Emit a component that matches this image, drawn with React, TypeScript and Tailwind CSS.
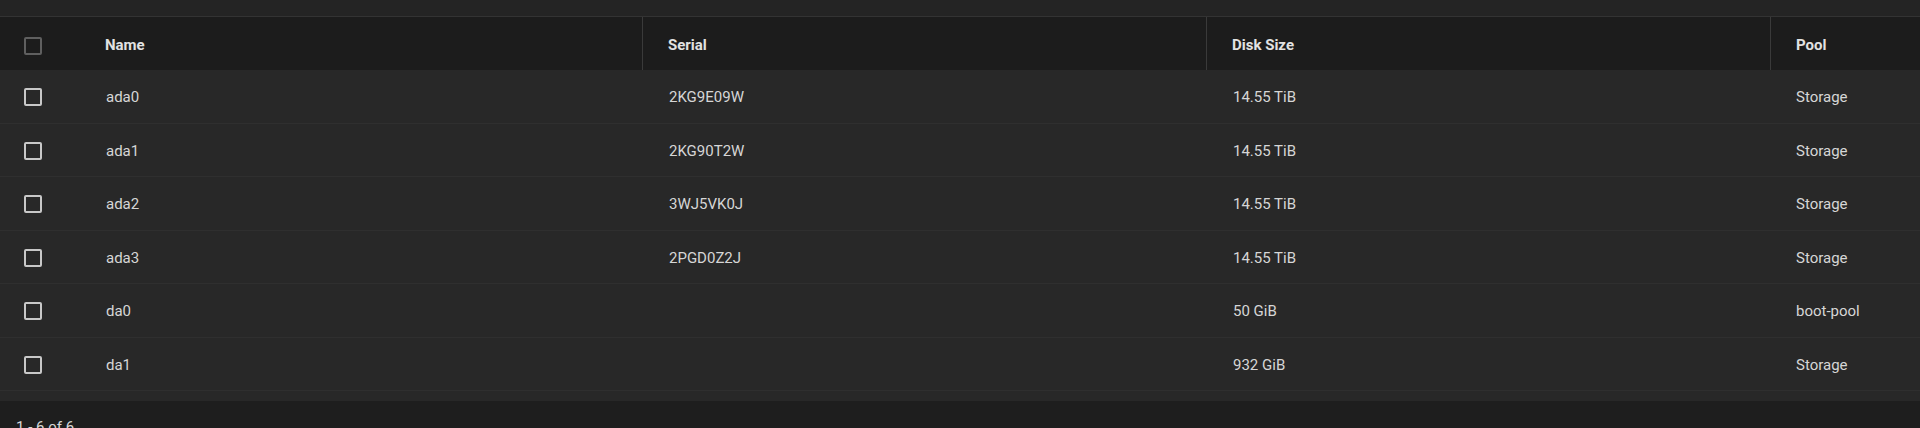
const rows = [
  { name: 'ada0', serial: '2KG9E09W', size: '14.55 TiB', pool: 'Storage' },
  { name: 'ada1', serial: '2KG90T2W', size: '14.55 TiB', pool: 'Storage' },
  { name: 'ada2', serial: '3WJ5VK0J', size: '14.55 TiB', pool: 'Storage' },
  { name: 'ada3', serial: '2PGD0Z2J', size: '14.55 TiB', pool: 'Storage' },
  { name: 'da0', serial: '', size: '50 GiB', pool: 'boot-pool' },
  { name: 'da1', serial: '', size: '932 GiB', pool: 'Storage' },
]

function Checkbox({ header }: { header?: boolean }) {
  return (
    <div
      className={
        'w-[18px] h-[18px] rounded-[2px] border-2 ' +
        (header ? 'border-[#5f5f5f]' : 'border-[#c8c8c8]')
      }
    />
  )
}

export default function App() {
  return (
    <div className="w-[1920px] h-[428px] overflow-hidden bg-[#1e1e1e] text-[15px] font-['Roboto','Liberation_Sans',sans-serif]">
      {/* top strip */}
      <div className="h-[16px] bg-[#242424] border-b border-[#333333] box-content" />

      {/* header */}
      <div className="flex h-[53px] bg-[#1c1c1c] text-[#e2e2e2] font-bold">
        <div className="w-[79px] shrink-0 flex items-center pl-[24px] pt-[5px]">
          <Checkbox header />
        </div>
        <div className="w-[563px] shrink-0 flex items-center pl-[26px] pt-[4px]">Name</div>
        <div className="w-[564px] shrink-0 flex items-center pl-[25px] pt-[4px] border-l border-[#3a3a3a]">Serial</div>
        <div className="w-[564px] shrink-0 flex items-center pl-[25px] pt-[4px] border-l border-[#3a3a3a]">Disk Size</div>
        <div className="flex-1 flex items-center pl-[25px] pt-[4px] border-l border-[#3a3a3a]">Pool</div>
      </div>

      {/* body */}
      <div className="bg-[#282828] text-[#d6d6d6] pb-[10px]">
        {rows.map((r, i) => (
          <div key={i} className="flex h-[53.5px] border-b border-[#2f2f2f]">
            <div className="w-[79px] shrink-0 flex items-center pl-[24px] pt-[2px]">
              <Checkbox />
            </div>
            <div className="w-[563px] shrink-0 flex items-center pl-[27px] pt-[2px]">{r.name}</div>
            <div className="w-[564px] shrink-0 flex items-center pl-[27px] pt-[2px]">{r.serial}</div>
            <div className="w-[564px] shrink-0 flex items-center pl-[27px] pt-[2px]">{r.size}</div>
            <div className="flex-1 flex items-center pl-[26px] pt-[2px]">{r.pool}</div>
          </div>
        ))}
      </div>

      {/* footer */}
      <div className="pl-[16px] pt-[15px] text-[#d6d6d6]">1 - 6 of 6</div>
    </div>
  )
}
